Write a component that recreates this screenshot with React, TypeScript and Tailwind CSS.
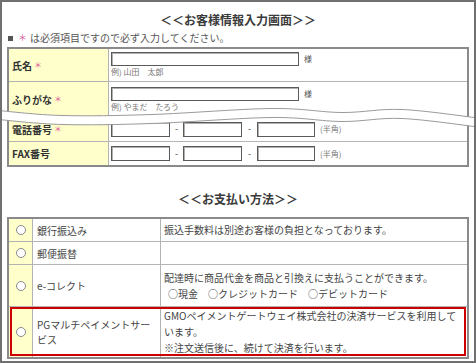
import React from 'react'

const font = { fontFamily: '"Noto Sans CJK JP", "Noto Sans", sans-serif' }

function smooth(points: [number, number][]) {
  let d = `M${points[0][0]},${points[0][1]}`
  for (let i = 0; i < points.length - 1; i++) {
    const p0 = points[i - 1] || points[i]
    const p1 = points[i]
    const p2 = points[i + 1]
    const p3 = points[i + 2] || p2
    const c1x = p1[0] + (p2[0] - p0[0]) / 6
    const c1y = p1[1] + (p2[1] - p0[1]) / 6
    const c2x = p2[0] - (p3[0] - p1[0]) / 6
    const c2y = p2[1] - (p3[1] - p1[1]) / 6
    d += ` C${c1x},${c1y} ${c2x},${c2y} ${p2[0]},${p2[1]}`
  }
  return d
}

function Wave() {
  const center: [number, number][] = [
    [-4, 13],
    [60, 18],
    [150, 17],
    [270, 11],
    [340, 15],
    [400, 12],
    [480, 21],
  ]
  const upper = center.map(([x, y]) => [x, y - 4.5] as [number, number])
  const lower = center.map(([x, y]) => [x, y + 4.5] as [number, number])
  const lowerRev = [...lower].reverse()
  const fill = smooth(upper) + ' L' + smooth(lowerRev).slice(1) + ' Z'
  return (
    <svg
      className="absolute left-0 top-[100px]"
      width="476"
      height="32"
      viewBox="0 0 476 32"
    >
      <path d={fill} fill="#fff" />
      <path d={smooth(upper)} fill="none" stroke="#9a9a9a" strokeWidth="1" />
      <path d={smooth(lower)} fill="none" stroke="#9a9a9a" strokeWidth="1" />
    </svg>
  )
}

function Field({ w }: { w: string }) {
  return (
    <span
      className={`block h-[15px] ${w} border border-[#5a5a5a] bg-white shadow-[inset_1px_1px_0_#b0b0b0]`}
    />
  )
}

function Req() {
  return <span className="ml-[2px] text-[8px] font-normal text-[#d9559b]">＊</span>
}

function Label({ children }: { children: React.ReactNode }) {
  return (
    <div className="flex w-[100px] shrink-0 items-center border-r border-[#b4b4b4] bg-[#ffffcc] pl-[3px] text-[10px] font-bold text-[#333]">
      {children}
    </div>
  )
}

function NameRow({
  label,
  example,
  pt,
  h,
}: {
  label: string
  example: string
  pt: string
  h: string
}) {
  return (
    <div className={`flex ${h} border-b border-[#b4b4b4]`}>
      <Label>
        {label}
        <Req />
      </Label>
      <div className={`flex flex-col pl-[2px] ${pt}`}>
        <div className="flex items-center">
          <span className="block h-[14px] w-[188px] border border-[#5a5a5a] bg-white shadow-[inset_1px_1px_0_#b0b0b0]" />
          <span className="ml-[5px] text-[8px] text-[#555]">様</span>
        </div>
        <span className="mt-[1px] text-[8px] leading-[10px] text-[#777]">{example}</span>
      </div>
    </div>
  )
}

function PhoneRow({ label, req, h, last }: { label: string; req?: boolean; h: string; last?: boolean }) {
  return (
    <div className={`flex ${h} ${last ? '' : 'border-b border-[#b4b4b4]'}`}>
      <Label>
        {label}
        {req && <Req />}
      </Label>
      <div className="flex items-center pl-[2px]">
        <Field w="w-[59px]" />
        <span className="w-[13px] text-center text-[9px] text-[#444]">-</span>
        <Field w="w-[59px]" />
        <span className="w-[15px] text-center text-[9px] text-[#444]">-</span>
        <Field w="w-[58px]" />
        <span className="ml-[5px] text-[8px] text-[#777]">(半角)</span>
      </div>
    </div>
  )
}

function Radio() {
  return <span className="block h-[10px] w-[10px] rounded-full border border-[#8a8a8a] bg-white" />
}

function PayRow({
  name,
  desc,
  h,
  last,
  highlight,
}: {
  name: React.ReactNode
  desc: React.ReactNode
  h: string
  last?: boolean
  highlight?: boolean
}) {
  return (
    <div className={`relative flex ${h} ${last ? '' : 'border-b border-[#b4b4b4]'}`}>
      <div className="flex w-[24px] shrink-0 items-center justify-center border-r border-[#b4b4b4] bg-[#ffffcc]">
        <Radio />
      </div>
      <div className="flex w-[128px] shrink-0 items-center border-r border-[#b4b4b4] pl-[4px] leading-[15px]">
        {name}
      </div>
      <div className="flex items-center pl-[3px] leading-[16px]">{desc}</div>
      {highlight && (
        <div className="absolute inset-x-[1px] top-0 bottom-[1px] border-2 border-[#cc0000]" />
      )}
    </div>
  )
}

export default function App() {
  return (
    <div
      className="relative h-[363px] w-[476px] overflow-hidden border-2 border-[#707070] bg-white px-[5px]"
      style={font}
    >
      <h1 className="pt-[10px] text-center text-[12px] leading-[16px] font-bold text-[#3a3a3a]">
        ＜＜お客様情報入力画面＞＞
      </h1>
      <p className="mt-[3px] flex items-center pl-[1px] text-[10px] leading-[14px] text-[#555]">
        <span className="mr-[5px] block h-[5px] w-[5px] bg-[#555]" />
        <span className="mr-[3px] text-[9px] text-[#d9559b]">＊</span>
        <span>は必須項目ですので必ず入力してください。</span>
      </p>

      <div className="mt-[2px] border-2 border-[#8a8a8a]">
        <NameRow label="氏名" example="例) 山田　太郎" pt="pt-[3px]" h="h-[33px]" />
        <NameRow label="ふりがな" example="例) やまだ　たろう" pt="pt-[5px]" h="h-[35px]" />
        <PhoneRow label="電話番号" req h="h-[25px]" />
        <PhoneRow label="FAX番号" h="h-[23px]" last />
      </div>

      <h2 className="mt-[24px] text-center text-[12px] leading-[16px] font-bold text-[#3a3a3a]">
        ＜＜お支払い方法＞＞
      </h2>

      <div className="mt-[10px] border-2 border-[#8a8a8a] text-[10px] text-[#444]">
        <PayRow h="h-[23px]" name="銀行振込み" desc="振込手数料は別途お客様の負担となっております。" />
        <PayRow h="h-[23px]" name="郵便振替" desc="" />
        <PayRow
          h="h-[42px]"
          name="e-コレクト"
          desc={
            <div>
              <div>配達時に商品代金を商品と引換えに支払うことができます。</div>
              <div className="pl-[4px]">○現金　○クレジットカード　○デビットカード</div>
            </div>
          }
        />
        <PayRow
          h="h-[50px]"
          last
          highlight
          name={
            <div>
              PGマルチペイメントサー
              <br />
              ビス
            </div>
          }
          desc={
            <div>
              <div>GMOペイメントゲートウェイ株式会社の決済サービスを利用して</div>
              <div>います。</div>
              <div>※注文送信後に、続けて決済を行います。</div>
            </div>
          }
        />
      </div>

      <Wave />
    </div>
  )
}
